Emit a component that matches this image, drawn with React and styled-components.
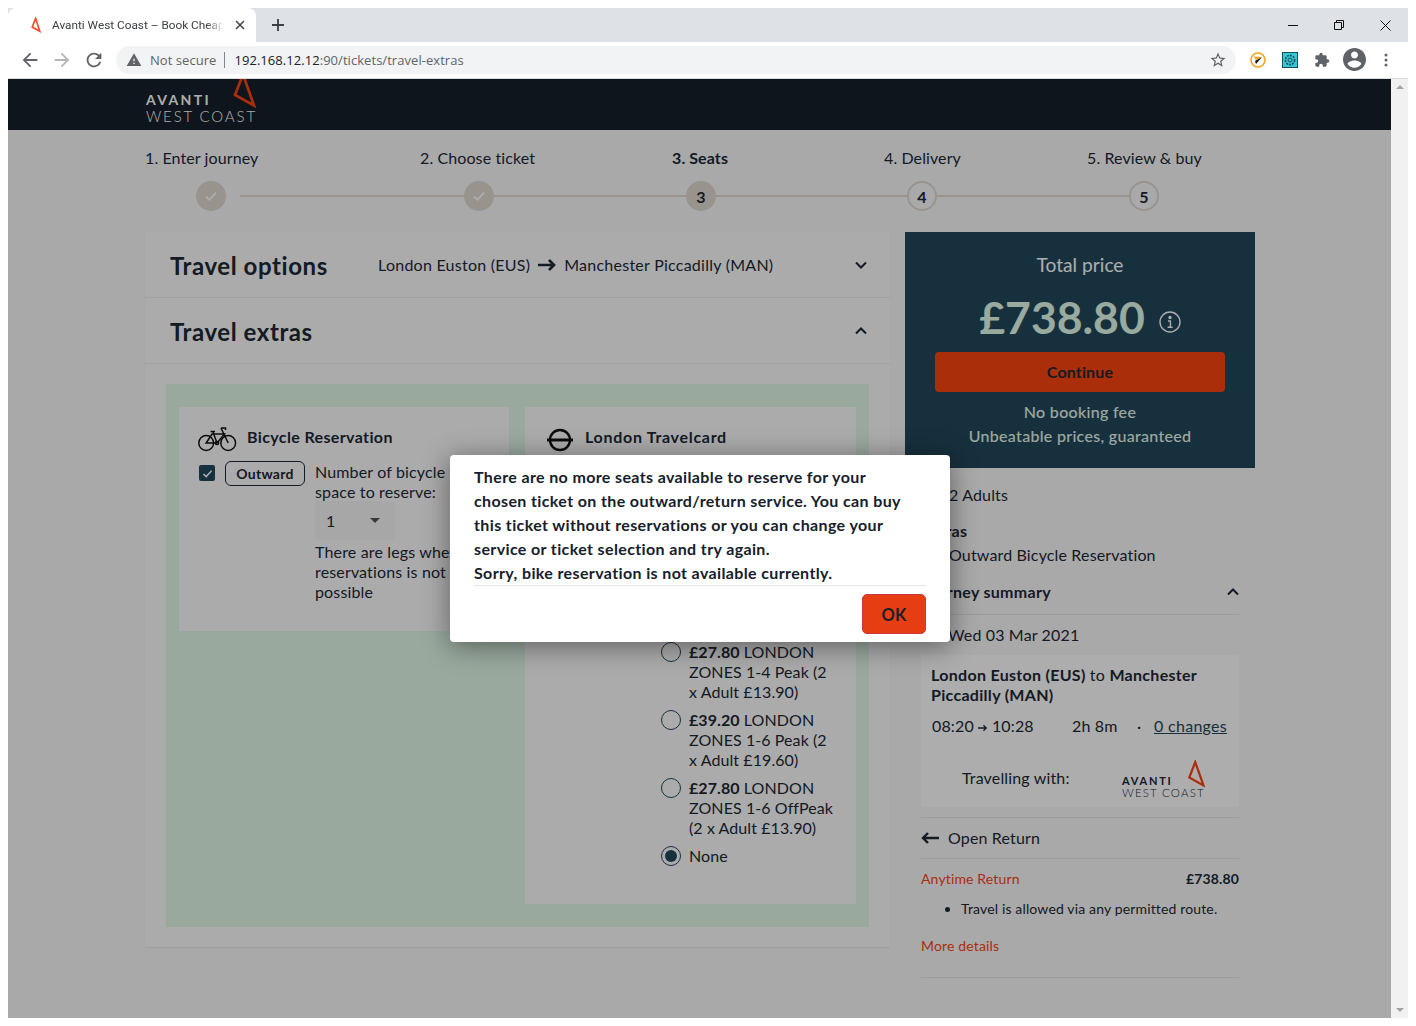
import React from "react";
import styled, { createGlobalStyle } from "styled-components";

const GlobalStyle = createGlobalStyle`
  html, body {
    margin: 0;
    padding: 0;
    background: #fff;
  }
  body {
    font-family: Lato, "Open Sans", sans-serif;
    font-size: 16px;
    letter-spacing: 0.15px;
    color: #1c2836;
  }
  * {
    box-sizing: border-box;
  }
`;

const Win = styled.div`
  margin: 8px;
  width: 1400px;
  height: 1010px;
  display: flex;
  flex-direction: column;
  overflow: hidden;
`;

/* browser chrome */
const TabStrip = styled.div`
  height: 34px;
  flex: none;
  background: #dee1e6;
  display: flex;
  align-items: stretch;
  letter-spacing: 0;
`;

const Tab = styled.div`
  width: 248px;
  background: #fff;
  border-radius: 8px 8px 0 0;
  display: flex;
  align-items: center;
  padding-left: 22px;
  font-family: Roboto, "Open Sans", sans-serif;
  font-size: 11.8px;
  color: #3c4043;
`;

const TabTitle = styled.span`
  margin-left: 10px;
  width: 172px;
  white-space: nowrap;
  -webkit-mask-image: linear-gradient(to right, #000 90%, transparent);
  mask-image: linear-gradient(to right, #000 90%, transparent);
`;

const TabClose = styled.svg`
  margin-left: 11px;
  width: 10px;
  height: 10px;
`;

const NewTab = styled.svg`
  margin: 10px 0 0 15px;
  width: 14px;
  height: 14px;
`;

const WinControls = styled.div`
  margin-left: auto;
  display: flex;
  align-items: center;
`;

const WinButton = styled.div`
  width: 46px;
  height: 30px;
  display: flex;
  align-items: center;
  justify-content: center;
`;

const Toolbar = styled.div`
  height: 37px;
  flex: none;
  background: #fff;
  border-bottom: 1px solid #dadce0;
  display: flex;
  align-items: center;
  padding: 0 0 1px 11px;
  letter-spacing: 0;
`;

const NavIcon = styled.svg`
  width: 22px;
  height: 22px;
  margin-right: 10px;
  fill: ${(p) => (p.$off ? "#b4b6b9" : "#5f6368")};
  flex: none;
`;

const Omnibox = styled.div`
  width: 1120px;
  height: 28px;
  margin-left: 1px;
  background: #f1f3f4;
  border-radius: 14px;
  display: flex;
  align-items: center;
  padding: 0 9px 0 10px;
  font-family: "Open Sans", sans-serif;
  font-size: 13px;
  letter-spacing: 0.05px;
  color: #5f6368;
  white-space: nowrap;
`;

const OmniIcon = styled.svg`
  width: 16px;
  height: 16px;
  fill: #5f6368;
  flex: none;
`;

const OmniLabel = styled.span`
  margin-left: 8px;
`;

const OmniSep = styled.span`
  width: 1px;
  height: 16px;
  background: #80868b;
  margin: 0 9px 0 8px;
`;

const UrlHost = styled.span`
  color: #202124;
`;

const Star = styled(OmniIcon)`
  margin-left: auto;
  width: 18px;
  height: 18px;
`;

const ExtIcon = styled.svg`
  flex: none;
  width: ${(p) => p.$size || 16}px;
  height: ${(p) => p.$size || 16}px;
  margin-left: ${(p) => p.$gap || 0}px;
  fill: #5f6368;
`;

/* viewport */
const Viewport = styled.div`
  flex: 1;
  min-height: 0;
  display: flex;
`;

const Page = styled.div`
  position: relative;
  flex: 1;
  min-width: 0;
  background: #fafafa;
  overflow: hidden;
`;

const Scrollbar = styled.div`
  width: 17px;
  flex: none;
  background: #f1f1f1;
  display: flex;
  flex-direction: column;
  justify-content: space-between;
  align-items: center;
  padding: 6px 0;
`;

const ScrollArrow = styled.span`
  width: 0;
  height: 0;
  border-left: 4px solid transparent;
  border-right: 4px solid transparent;
  ${(p) => (p.$down ? "border-top: 4px solid #a3a3a3;" : "border-bottom: 4px solid #a3a3a3;")}
`;

const Overlay = styled.div`
  position: absolute;
  inset: 0;
  background: rgba(0, 0, 0, 0.32);
`;

const Header = styled.header`
  height: 51px;
  background: #16202c;
  overflow: hidden;
  padding: 13px 0 0 138px;
`;

const LogoBox = styled.div`
  position: relative;
  width: 110px;
  line-height: 1;
  color: #fff;
`;

const LogoTop = styled.div`
  font-size: 14px;
  line-height: 16px;
  font-weight: 700;
  letter-spacing: 2.35px;
`;

const LogoBottom = styled.div`
  font-size: 15px;
  line-height: 16px;
  font-weight: 300;
  letter-spacing: 1.85px;
  white-space: nowrap;
`;

const LogoMark = styled.svg`
  position: absolute;
  left: 86px;
  top: -20px;
  width: 24px;
  height: 38px;
`;

const SmallLogo = styled.div`
  position: relative;
  width: 84px;
  margin-top: 20px;
  color: #1c2836;
`;

const SmallTop = styled.div`
  font-size: 11px;
  line-height: 12px;
  font-weight: 700;
  letter-spacing: 1.75px;
`;

const SmallBottom = styled.div`
  font-size: 11.5px;
  line-height: 12px;
  font-weight: 300;
  letter-spacing: 1.2px;
  white-space: nowrap;
`;

const SmallMark = styled.svg`
  position: absolute;
  left: 65px;
  top: -15px;
  width: 18px;
  height: 29px;
`;

const Container = styled.div`
  width: 1110px;
  margin-left: 137px;
`;

const StepLabels = styled.div`
  display: grid;
  grid-template-columns: 275px 252px 212px 203px 1fr;
  height: 51px;
  padding: 18px 0 0;
  line-height: 20px;
  letter-spacing: 0.1px;
`;

const StepLabel = styled.div`
  font-weight: ${(p) => (p.$active ? 700 : 400)};
`;

const StepTrack = styled.div`
  display: flex;
  align-items: center;
  height: 30px;
  padding-left: 51px;
`;

const StepDot = styled.div`
  width: 30px;
  height: 30px;
  flex: none;
  border-radius: 50%;
  display: flex;
  align-items: center;
  justify-content: center;
  font-weight: 700;
  background: ${(p) => (p.$todo ? "#fafafa" : "#e0dad0")};
  border: ${(p) => (p.$todo ? "2px solid #e0dad0" : "none")};
`;

const StepLine = styled.div`
  height: 2px;
  flex: none;
  width: ${(p) => p.$w}px;
  margin-left: ${(p) => p.$gap || 0}px;
  background: #e0d9cf;
`;

const Columns = styled.div`
  display: flex;
  gap: 15px;
  margin-top: 21px;
  align-items: flex-start;
`;

const MainCol = styled.main`
  width: 745px;
  flex: none;
  background: #fdfdfd;
  box-shadow: 0 0 2px rgba(0, 0, 0, 0.05);
  border-bottom: 1px solid #ededed;
`;

const SectionHead = styled.div`
  height: ${(p) => p.$h}px;
  display: flex;
  align-items: center;
  padding: 0 22px 0 25px;
  border-bottom: 1px solid #ededed;
`;

const SectionTitle = styled.h2`
  margin: 0;
  padding-top: 2px;
  font-size: 24px;
  font-weight: 700;
  letter-spacing: 0.58px;
  width: 208px;
  flex: none;
`;

const Route = styled.div`
  display: flex;
  align-items: center;
  gap: 8px;
  letter-spacing: 0.25px;
`;

const Chevron = styled.svg`
  margin-left: auto;
  width: 14px;
  height: 14px;
  fill: none;
  stroke: #1c2836;
  stroke-width: 2;
`;

const Extras = styled.div`
  margin: 20px 21px 20px;
  background: #e2f9e9;
  padding: 23px 13px;
  display: flex;
  gap: 16px;
  align-items: flex-start;
`;

const ExtraCard = styled.section`
  background: #fdfdfd;
  width: ${(p) => p.$w}px;
  height: ${(p) => p.$h}px;
  flex: none;
  padding: ${(p) => p.$pad};
`;

const CardHead = styled.div`
  display: flex;
  align-items: center;
  gap: ${(p) => p.$gap}px;
  height: 28px;
  font-weight: 700;
  letter-spacing: ${(p) => p.$track}px;
`;

const HeadIcon = styled.svg`
  flex: none;
  margin-top: ${(p) => p.$top}px;
  margin-left: ${(p) => p.$left}px;
`;

const BikeRow = styled.div`
  display: flex;
  align-items: flex-start;
  margin-top: 11px;
`;

const Check = styled.div`
  width: 16px;
  height: 16px;
  flex: none;
  margin-top: 4px;
  background: #23475a;
  border-radius: 2px;
  display: flex;
  align-items: center;
  justify-content: center;
`;

const Pill = styled.div`
  flex: none;
  margin-left: 10px;
  width: 80px;
  height: 25px;
  border: 1px solid #1c2836;
  border-radius: 6px;
  font-size: 14px;
  font-weight: 700;
  letter-spacing: 0.3px;
  display: flex;
  align-items: center;
  justify-content: center;
`;

const BikeText = styled.div`
  margin: 1px 0 0 10px;
  width: 180px;
  line-height: 20px;
`;

const Select = styled.div`
  width: 80px;
  height: 39px;
  margin: -1px 0 2px;
  background: #f6f6f6;
  border-radius: 2px;
  display: flex;
  align-items: center;
  justify-content: space-between;
  padding: 0 15px 0 11px;
`;

const SelectCaret = styled.span`
  width: 0;
  height: 0;
  border-left: 5px solid transparent;
  border-right: 5px solid transparent;
  border-top: 5px solid #555;
`;

const OptionList = styled.div`
  margin: 192px 0 0 143px;
  width: 146px;
  display: flex;
  flex-direction: column;
  gap: 8px;
`;

const Option = styled.label`
  position: relative;
  display: block;
  line-height: 20px;
  letter-spacing: 0.08px;
`;

const Radio = styled.span`
  position: absolute;
  left: -28px;
  top: 0;
  width: 20px;
  height: 20px;
  border: 1.5px solid #23475a;
  border-radius: 50%;
  display: flex;
  align-items: center;
  justify-content: center;
  &::after {
    content: "";
    display: ${(p) => (p.$on ? "block" : "none")};
    width: 12px;
    height: 12px;
    border-radius: 50%;
    background: #23475a;
  }
`;

/* sidebar */
const Side = styled.aside`
  width: 350px;
  flex: none;
`;

const PricePanel = styled.div`
  height: 236px;
  background: #23475a;
  color: #fff;
  padding: 20px 30px 0;
  display: flex;
  flex-direction: column;
  align-items: center;
`;

const PriceLabel = styled.div`
  font-size: 19.2px;
  letter-spacing: 0;
  line-height: 26px;
`;

const PriceRow = styled.div`
  display: flex;
  align-items: flex-end;
  gap: 14px;
  margin: 16px 0 12px;
  color: #e2fbea;
  height: 46px;
  letter-spacing: 0;
`;

const PriceValue = styled.div`
  font-size: 44.5px;
  line-height: 46px;
  font-weight: 700;
`;

const InfoIcon = styled.svg`
  width: 22px;
  height: 22px;
  margin-bottom: 7px;
`;

const Continue = styled.div`
  width: 100%;
  height: 40px;
  padding-bottom: 2px;
  background: #fb4510;
  border-radius: 4px;
  color: #1c2836;
  font-weight: 700;
  display: flex;
  align-items: center;
  justify-content: center;
`;

const PriceNote = styled.div`
  color: #e8f8ee;
  font-weight: 500;
  line-height: 24px;
  letter-spacing: 0.3px;
  margin-top: ${(p) => p.$top || 0}px;
`;

const Summary = styled.div`
  padding: 0 16px;
`;

const SumLine = styled.div`
  display: flex;
  align-items: center;
  line-height: 24px;
  margin-top: ${(p) => p.$top || 0}px;
  padding-left: ${(p) => p.$indent || 0}px;
`;

const SumHead = styled(SumLine)`
  font-weight: 700;
  letter-spacing: 0.3px;
  justify-content: space-between;
`;

const Rule = styled.div`
  height: 1px;
  background: #e6e6e6;
  margin-top: ${(p) => p.$top || 0}px;
`;

const SmallChevron = styled.svg`
  width: 14px;
  height: 14px;
  fill: none;
  stroke: #1c2836;
  stroke-width: 2;
  margin-right: -1px;
`;

const Arrow = styled.svg`
  width: 18px;
  height: 12px;
  flex: none;
  margin-right: 9px;
`;

const JourneyCard = styled.div`
  margin-top: 8px;
  height: 152px;
  background: #fff;
  padding: 10px 10px 0;
`;

const JourneyTitle = styled.div`
  line-height: 20px;
  font-weight: 700;
  letter-spacing: 0.3px;
  & span {
    font-weight: 400;
  }
`;

const Times = styled.div`
  display: grid;
  grid-template-columns: 140px 65px 17px 1fr;
  margin: 11px 0 0 1px;
  line-height: 20px;
  white-space: nowrap;
`;

const SmallArrow = styled.svg`
  width: 10px;
  height: 8px;
  margin: 0 4px;
`;

const Changes = styled.span`
  text-decoration: underline;
  color: #23475a;
  letter-spacing: 0.3px;
`;

const Operator = styled.div`
  display: grid;
  grid-template-columns: 160px 84px;
  align-items: center;
  margin: 19px 0 0 31px;
  height: 40px;
`;

const FareRow = styled.div`
  display: flex;
  justify-content: space-between;
  font-size: 14px;
  line-height: 20px;
  margin-top: 10px;
`;

const RedText = styled.span`
  color: #fb4510;
  font-size: 14px;
  line-height: 20px;
`;

const FareList = styled.ul`
  margin: 10px 0 0;
  padding: 0 0 0 40px;
  font-size: 14px;
  line-height: 20px;
`;

const MoreLine = styled.div`
  margin-top: 16px;
  line-height: 20px;
`;

/* dialog */
const Dialog = styled.div`
  position: absolute;
  left: 442px;
  top: 376px;
  width: 500px;
  height: 187px;
  background: #fff;
  border-radius: 4px;
  box-shadow: 0 4px 28px rgba(0, 0, 0, 0.45);
  padding: 10px 24px 0;
`;

const DialogText = styled.div`
  font-weight: 700;
  line-height: 24px;
  letter-spacing: 0.37px;
  color: #16202c;
  white-space: nowrap;
  border-bottom: 1px solid #e6e6e6;
`;

const DialogFoot = styled.div`
  display: flex;
  justify-content: flex-end;
  padding-top: 8px;
`;

const OkButton = styled.div`
  width: 64px;
  height: 40px;
  padding-top: 1px;
  background: #e63d12;
  border: 1px solid #c93b3b;
  border-radius: 5px;
  color: #16202c;
  font-weight: 700;
  font-size: 16.5px;
  display: flex;
  align-items: center;
  justify-content: center;
`;

const Tick = ({ color = "#fff", size = 16 }) => (
  <svg width={size} height={size} viewBox="0 0 16 16" fill="none" stroke={color} strokeWidth="1.8">
    <path d="M3 8.5l3.4 3.3L13 4.6" />
  </svg>
);

const RightArrow = () => (
  <svg width="18" height="12" viewBox="0 0 18 12" fill="none" stroke="#1c2836" strokeWidth="2.6">
    <path d="M0 6h16M11 1l5 5-5 5" />
  </svg>
);

const triangle = "M11 2.5 3 23l19 10.5z";

const Logo = () => (
  <LogoBox>
    <LogoTop>AVANTI</LogoTop>
    <LogoBottom>WEST COAST</LogoBottom>
    <LogoMark viewBox="0 0 24 38">
      <path d={triangle} fill="none" stroke="#fb4510" strokeWidth="2.7" />
    </LogoMark>
  </LogoBox>
);

const TinyLogo = () => (
  <SmallLogo>
    <SmallTop>AVANTI</SmallTop>
    <SmallBottom>WEST COAST</SmallBottom>
    <SmallMark viewBox="0 0 24 38">
      <path d={triangle} fill="none" stroke="#fb4510" strokeWidth="3" />
    </SmallMark>
  </SmallLogo>
);

const Bike = () => (
  <HeadIcon $top={6} $left={-1} width="39" height="26" viewBox="0 0 39 26" fill="none" stroke="#111" strokeWidth="1.5">
    <circle cx="8.2" cy="17" r="7.4" />
    <circle cx="30.2" cy="17" r="7.4" />
    <path d="M8.2 17 14 8h12.5L19 17H8.2zM14.8 5.5 19 17M23 2l7.2 15M12.5 5.5h4.5M23 2h4.5v2" />
    <circle cx="19" cy="17" r="1.6" />
  </HeadIcon>
);

const Roundel = () => (
  <HeadIcon $top={8} $left={1} width="26" height="24" viewBox="0 0 26 24" fill="none" stroke="#111" strokeWidth="2.4">
    <circle cx="13" cy="12" r="10" />
    <path d="M0 12h26" strokeWidth="3" />
  </HeadIcon>
);

const steps = ["1. Enter journey", "2. Choose ticket", "3. Seats", "4. Delivery", "5. Review & buy"];

const options = [
  { price: "£27.80", text: " LONDON ZONES 1-4 Peak (2 x Adult £13.90)" },
  { price: "£39.20", text: " LONDON ZONES 1-6 Peak (2 x Adult £19.60)" },
  { price: "£27.80", text: " LONDON ZONES 1-6 OffPeak (2 x Adult £13.90)" },
];

export default function App() {
  return (
    <>
      <GlobalStyle />
      <Win>
        <TabStrip>
          <Tab>
            <svg width="12" height="16" viewBox="0 0 24 38">
              <path d="M11 3 3 24l18 10z" fill="none" stroke="#f0512a" strokeWidth="4" />
            </svg>
            <TabTitle>Avanti West Coast – Book Cheap</TabTitle>
            <TabClose viewBox="0 0 10 10" stroke="#45484c" strokeWidth="1.6">
              <path d="M1 1l8 8M9 1 1 9" />
            </TabClose>
          </Tab>
          <NewTab viewBox="0 0 14 14" stroke="#3c4043" strokeWidth="1.8">
            <path d="M7 1v12M1 7h12" />
          </NewTab>
          <WinControls>
            <WinButton>
              <svg width="10" height="10" viewBox="0 0 10 10" stroke="#111">
                <path d="M0 5.5h10" />
              </svg>
            </WinButton>
            <WinButton>
              <svg width="10" height="10" viewBox="0 0 10 10" fill="none" stroke="#111">
                <path d="M.5 2.5h7v7h-7zM2.5 2.5v-2h7v7h-2" />
              </svg>
            </WinButton>
            <WinButton>
              <svg width="11" height="11" viewBox="0 0 11 11" stroke="#111">
                <path d="M.5.5l10 10M10.5.5l-10 10" />
              </svg>
            </WinButton>
          </WinControls>
        </TabStrip>

        <Toolbar>
          <NavIcon viewBox="0 0 24 24">
            <path d="M20 11H7.83l5.59-5.59L12 4l-8 8 8 8 1.41-1.41L7.83 13H20v-2z" />
          </NavIcon>
          <NavIcon $off viewBox="0 0 24 24">
            <path d="M4 11h12.17l-5.59-5.59L12 4l8 8-8 8-1.41-1.41L16.17 13H4v-2z" />
          </NavIcon>
          <NavIcon viewBox="0 0 24 24">
            <path d="M17.65 6.35C16.2 4.9 14.21 4 12 4c-4.42 0-7.99 3.58-7.99 8s3.57 8 7.99 8c3.73 0 6.84-2.55 7.73-6h-2.08c-.82 2.33-3.04 4-5.65 4-3.31 0-6-2.69-6-6s2.69-6 6-6c1.66 0 3.14.69 4.22 1.78L13 11h7V4l-2.35 2.35z" />
          </NavIcon>
          <Omnibox>
            <OmniIcon viewBox="0 0 24 24">
              <path d="M1 21h22L12 2 1 21zm12-3h-2v-2h2v2zm0-4h-2v-4h2v4z" />
            </OmniIcon>
            <OmniLabel>Not secure</OmniLabel>
            <OmniSep />
            <span>
              <UrlHost>192.168.12.12</UrlHost>:90/tickets/travel-extras
            </span>
            <Star viewBox="0 0 24 24">
              <path d="M22 9.24l-7.19-.62L12 2 9.19 8.63 2 9.24l5.46 4.73L5.82 21 12 17.27 18.18 21l-1.63-7.03L22 9.24zM12 15.4l-3.76 2.27 1-4.28-3.32-2.88 4.38-.38L12 6.1l1.71 4.04 4.38.38-3.32 2.88 1 4.28L12 15.4z" />
            </Star>
          </Omnibox>
          <ExtIcon $gap={14} viewBox="0 0 16 16">
            <circle cx="8" cy="8" r="7" fill="#fff" stroke="#f5a31a" strokeWidth="1.6" />
            <path d="M3.5 4.5 12 5 6 8z" fill="#f5a31a" />
            <path d="M12 5 6 12l-1-3z" fill="#111" />
          </ExtIcon>
          <ExtIcon $gap={16} viewBox="0 0 16 16">
            <rect x=".5" y=".5" width="15" height="15" fill="#35c7d8" stroke="#17505c" />
            <circle cx="8" cy="8" r="4.6" fill="none" stroke="#17505c" strokeWidth="1.6" strokeDasharray="2 1" />
            <circle cx="8" cy="8" r="2" fill="none" stroke="#17505c" />
          </ExtIcon>
          <ExtIcon $gap={16} viewBox="0 0 24 24">
            <path d="M20.5 11H19V7c0-1.1-.9-2-2-2h-4V3.5C13 2.12 11.88 1 10.5 1S8 2.12 8 3.5V5H4c-1.1 0-1.99.9-1.99 2v3.8H3.5c1.49 0 2.7 1.21 2.7 2.7s-1.21 2.7-2.7 2.7H2V20c0 1.1.9 2 2 2h3.8v-1.5c0-1.49 1.21-2.7 2.7-2.7 1.49 0 2.7 1.21 2.7 2.7V22H17c1.1 0 2-.9 2-2v-4h1.5c1.38 0 2.5-1.12 2.5-2.5S21.88 11 20.5 11z" />
          </ExtIcon>
          <ExtIcon $size={23} $gap={13} viewBox="2 2 20 20">
            <path d="M12 2C6.48 2 2 6.48 2 12s4.48 10 10 10 10-4.48 10-10S17.52 2 12 2zm0 3c1.66 0 3 1.34 3 3s-1.34 3-3 3-3-1.34-3-3 1.34-3 3-3zm0 14.2c-2.5 0-4.71-1.28-6-3.22.03-1.99 4-3.08 6-3.08 1.99 0 5.97 1.09 6 3.08-1.29 1.94-3.5 3.22-6 3.22z" />
          </ExtIcon>
          <ExtIcon $size={14} $gap={13} viewBox="0 0 14 14">
            <circle cx="7" cy="2" r="1.5" />
            <circle cx="7" cy="7" r="1.5" />
            <circle cx="7" cy="12" r="1.5" />
          </ExtIcon>
        </Toolbar>

        <Viewport>
          <Page>
            <Header>
              <Logo />
            </Header>
            <Container>
              <StepLabels>
                {steps.map((s, i) => (
                  <StepLabel key={s} $active={i === 2}>
                    {s}
                  </StepLabel>
                ))}
              </StepLabels>
              <StepTrack>
                <StepDot>
                  <Tick />
                </StepDot>
                <StepLine $gap={14} $w={224} />
                <StepDot>
                  <Tick />
                </StepDot>
                <StepLine $w={192} />
                <StepDot>3</StepDot>
                <StepLine $w={191} />
                <StepDot $todo>4</StepDot>
                <StepLine $w={192} />
                <StepDot $todo>5</StepDot>
              </StepTrack>

              <Columns>
                <MainCol>
                  <SectionHead $h={66}>
                    <SectionTitle>Travel options</SectionTitle>
                    <Route>
                      London Euston (EUS)
                      <RightArrow />
                      Manchester Piccadilly (MAN)
                    </Route>
                    <Chevron viewBox="0 0 14 14">
                      <path d="M2 4.5l5 5 5-5" />
                    </Chevron>
                  </SectionHead>
                  <SectionHead $h={66}>
                    <SectionTitle>Travel extras</SectionTitle>
                    <Chevron viewBox="0 0 14 14">
                      <path d="M2 9.5l5-5 5 5" />
                    </Chevron>
                  </SectionHead>
                  <Extras>
                    <ExtraCard $w={330} $h={224} $pad="15px 20px 0">
                      <CardHead $gap={10} $track={0.37}>
                        <Bike />
                        Bicycle Reservation
                      </CardHead>
                      <BikeRow>
                        <Check>
                          <Tick size={13} />
                        </Check>
                        <Pill>Outward</Pill>
                        <BikeText>
                          Number of bicycle
                          <br />
                          space to reserve:
                          <Select>
                            1
                            <SelectCaret />
                          </Select>
                          There are legs where
                          <br />
                          reservations is not
                          <br />
                          possible
                        </BikeText>
                      </BikeRow>
                    </ExtraCard>
                    <ExtraCard $w={331} $h={497} $pad="15px 21px 0">
                      <CardHead $gap={12} $track={0.7}>
                        <Roundel />
                        London Travelcard
                      </CardHead>
                      <OptionList>
                        {options.map((o) => (
                          <Option key={o.text}>
                            <Radio />
                            <b>{o.price}</b>
                            {o.text}
                          </Option>
                        ))}
                        <Option>
                          <Radio $on />
                          None
                        </Option>
                      </OptionList>
                    </ExtraCard>
                  </Extras>
                </MainCol>

                <Side>
                  <PricePanel>
                    <PriceLabel>Total price</PriceLabel>
                    <PriceRow>
                      <PriceValue>£738.80</PriceValue>
                      <InfoIcon viewBox="0 0 22 22" fill="none" stroke="#fff" strokeWidth="1.4">
                        <circle cx="11" cy="11" r="10" />
                        <path d="M9 10h2.4v6M8.6 16.2h5" />
                        <circle cx="11" cy="6.5" r="1" fill="#fff" />
                      </InfoIcon>
                    </PriceRow>
                    <Continue>Continue</Continue>
                    <PriceNote $top={8}>No booking fee</PriceNote>
                    <PriceNote>Unbeatable prices, guaranteed</PriceNote>
                  </PricePanel>
                  <Summary>
                    <SumLine $top={15} $indent={28}>
                      2 Adults
                    </SumLine>
                    <SumHead $top={12}>Extras</SumHead>
                    <SumLine $indent={28} $top={0}>
                      Outward Bicycle Reservation
                    </SumLine>
                    <SumHead $top={13}>
                      Journey summary
                      <SmallChevron viewBox="0 0 14 14">
                        <path d="M2 9.5l5-5 5 5" />
                      </SmallChevron>
                    </SumHead>
                    <Rule $top={10} />
                    <SumLine $top={8}>
                      <Arrow viewBox="0 0 18 12" fill="none" stroke="#1c2836" strokeWidth="2.4">
                        <path d="M0 6h16M11 1l5 5-5 5" />
                      </Arrow>
                      Wed 03 Mar 2021
                    </SumLine>
                    <JourneyCard>
                      <JourneyTitle>
                        London Euston (EUS) <span>to</span> Manchester Piccadilly (MAN)
                      </JourneyTitle>
                      <Times>
                        <span>
                          08:20
                          <SmallArrow viewBox="0 0 11 8" fill="none" stroke="#1c2836" strokeWidth="1.4">
                            <path d="M0 4h9M6 1l3 3-3 3" />
                          </SmallArrow>
                          10:28
                        </span>
                        <span>2h 8m</span>
                        <span>·</span>
                        <Changes>0 changes</Changes>
                      </Times>
                      <Operator>
                        <span>Travelling with:</span>
                        <TinyLogo />
                      </Operator>
                    </JourneyCard>
                    <Rule $top={10} />
                    <SumLine $top={8}>
                      <Arrow viewBox="0 0 18 12" fill="none" stroke="#1c2836" strokeWidth="2.4">
                        <path d="M18 6H2M7 1 2 6l5 5" />
                      </Arrow>
                      Open Return
                    </SumLine>
                    <Rule $top={8} />
                    <FareRow>
                      <RedText>Anytime Return</RedText>
                      <b>£738.80</b>
                    </FareRow>
                    <FareList>
                      <li>Travel is allowed via any permitted route.</li>
                    </FareList>
                    <MoreLine>
                      <RedText>More details</RedText>
                    </MoreLine>
                    <Rule $top={21} />
                  </Summary>
                </Side>
              </Columns>
            </Container>
            <Overlay />
            <Dialog>
              <DialogText>
                There are no more seats available to reserve for your
                <br />
                chosen ticket on the outward/return service. You can buy
                <br />
                this ticket without reservations or you can change your
                <br />
                service or ticket selection and try again.
                <br />
                Sorry, bike reservation is not available currently.
              </DialogText>
              <DialogFoot>
                <OkButton>OK</OkButton>
              </DialogFoot>
            </Dialog>
          </Page>
          <Scrollbar>
            <ScrollArrow />
            <ScrollArrow $down />
          </Scrollbar>
        </Viewport>
      </Win>
    </>
  );
}
